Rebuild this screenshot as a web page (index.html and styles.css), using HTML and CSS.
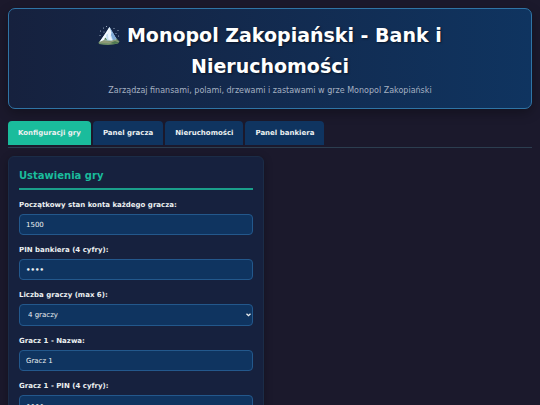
FILE: index.html
```
<!DOCTYPE html>
<html lang="pl">
<head>
	<meta charset="UTF-8">
	<meta name="viewport" content="width=device-width, initial-scale=1.0">
	<title>Monopol Zakopiański</title>
	<link rel="stylesheet" href="styles.css">
</head>
<body>
	<header>
		<h1>
			<svg class="logo" viewBox="0 0 44 40" aria-hidden="true">
				<path fill="#6f8f68" d="M1 33 L9 25 L35 23 L43 31 L40 35 Q23 40 2 36Z"/>
				<path fill="#c5dff2" d="M3 32 L14 16 L18 10 L23 2 L29 12 L37 26 L31 30 L17 29Z"/>
				<path fill="#f7fbff" d="M3 32 L14 16 L18 10 L23 2 L21 14 L16 18 L17 25 L11 29Z"/>
				<path fill="#7fa9d4" d="M23 2 L29 12 L37 26 L30 29 L27 20 L23 16Z"/>
				<path fill="#eef6fd" d="M23 2 L27 13 L25 21 L29 29 L21 27 L20 17Z"/>
				<path fill="#8f9a78" d="M1 33 L12 28 L23 31 L34 27 L42 32 L24 35Z"/>
				<path fill="#4f7950" d="M12 27 L15 23 L18 28Z M25 34 L34 30 L42 33 L33 36Z"/>
				<g fill="#b9c9dc">
					<circle cx="5" cy="10" r="1"/>
					<circle cx="11" cy="4" r="1"/>
					<circle cx="12" cy="12" r="1"/>
					<circle cx="4" cy="19" r="1"/>
					<circle cx="17" cy="1" r="1"/>
					<circle cx="32" cy="5" r="1"/>
					<circle cx="40" cy="9" r="1"/>
					<circle cx="36" cy="15" r="1"/>
					<circle cx="41" cy="20" r="1"/>
				</g>
			</svg>
			Monopol Zakopiański - Bank i Nieruchomości
		</h1>
		<p class="subtitle">Zarządzaj finansami, polami, drzewami i zastawami w grze Monopol Zakopiański</p>
	</header>

	<nav class="tabs">
		<button type="button" class="tab active">Konfiguracji gry</button>
		<button type="button" class="tab">Panel gracza</button>
		<button type="button" class="tab">Nieruchomości</button>
		<button type="button" class="tab">Panel bankiera</button>
	</nav>

	<main class="grid">
		<form class="card">
			<h2>Ustawienia gry</h2>
			<div class="form-group">
				<label for="startMoney">Początkowy stan konta każdego gracza:</label>
				<input type="text" inputmode="numeric" id="startMoney" value="1500">
			</div>
			<div class="form-group">
				<label for="bankerPin">PIN bankiera (4 cyfry):</label>
				<input type="password" id="bankerPin" maxlength="4" value="1234">
			</div>
			<div class="form-group">
				<label for="playerCount">Liczba graczy (max 6):</label>
				<select id="playerCount">
					<option>2 graczy</option>
					<option>3 graczy</option>
					<option selected>4 graczy</option>
					<option>5 graczy</option>
					<option>6 graczy</option>
				</select>
			</div>
			<div class="form-group">
				<label for="name1">Gracz 1 - Nazwa:</label>
				<input type="text" id="name1" value="Gracz 1">
			</div>
			<div class="form-group">
				<label for="pin1">Gracz 1 - PIN (4 cyfry):</label>
				<input type="password" id="pin1" maxlength="4" value="1111">
			</div>
		</form>
	</main>
</body>
</html>
```

FILE: styles.css
```
*{
	margin: 0;
	padding: 0;
	box-sizing: border-box;
}
html{
	scrollbar-width: none;
}
body{
	padding: 8px;
	background: #1b192c;
	color: #ecf0f1;
	font-family: "DejaVu Sans", Verdana, sans-serif;
	font-size: 7px;
	line-height: 12px;
}
header{
	margin-bottom: 12px;
	padding: 11px;
	border: 1px solid #2f74a5;
	border-radius: 7px;
	background: linear-gradient(90deg, #16213e, #0f3460);
	box-shadow: 0 4px 12px rgba(0,0,0,0.3);
	text-align: center;
}
h1{
	margin-bottom: 3px;
	color: #fff;
	font-size: 19px;
	line-height: 31px;
	text-shadow: 1px 1px 2px rgba(0,0,0,0.5);
}
.logo{
	width: 22px;
	height: 20px;
	vertical-align: -4px;
}
.subtitle{
	color: #a5b1c2;
	font-size: 8px;
}
.tabs{
	display: flex;
	gap: 2px;
	margin-bottom: 8px;
	padding-bottom: 2px;
	border-bottom: 1px solid #2c3e50;
}
.tab{
	padding: 6px 10px;
	border: none;
	border-radius: 4px 4px 0 0;
	background: #0f3460;
	color: #ecf0f1;
	font: bold 7px/12px "DejaVu Sans", Verdana, sans-serif;
}
.tab.active{
	background: #1abc9c;
}
.grid{
	display: grid;
	grid-template-columns: 1fr 1fr;
	gap: 12px;
}
.card{
	padding: 10px;
	border: 1px solid #1b2c47;
	border-radius: 6px;
	background: #16213e;
	box-shadow: 0 2px 8px rgba(0,0,0,0.3);
}
h2{
	margin-bottom: 9px;
	padding-bottom: 3px;
	border-bottom: 2px solid #1a9f8a;
	color: #1abc9c;
	font-size: 10px;
	line-height: 18px;
}
.form-group{
	margin-bottom: 9px;
}
label{
	display: block;
	margin-bottom: 3px;
	font-weight: bold;
}
input,
select{
	display: block;
	width: 100%;
	height: 21px;
	padding: 0 6px;
	border: 1px solid #23588c;
	border-radius: 4px;
	background: #0f3460;
	color: #ecf0f1;
	font: 7px "DejaVu Sans", Verdana, sans-serif;
}
input[type="password"]{
	font-weight: bold;
}
select{
	height: 22px;
	padding: 0 8px;
	appearance: none;
	background: #0f3460 url("data:image/svg+xml,%3Csvg xmlns='http://www.w3.org/2000/svg' width='5' height='4' viewBox='0 0 5 4'%3E%3Cpath d='M.5 .7l2 2 2-2' fill='none' stroke='%23ecf0f1' stroke-width='1.3'/%3E%3C/svg%3E") no-repeat right 1px center;
}
```
